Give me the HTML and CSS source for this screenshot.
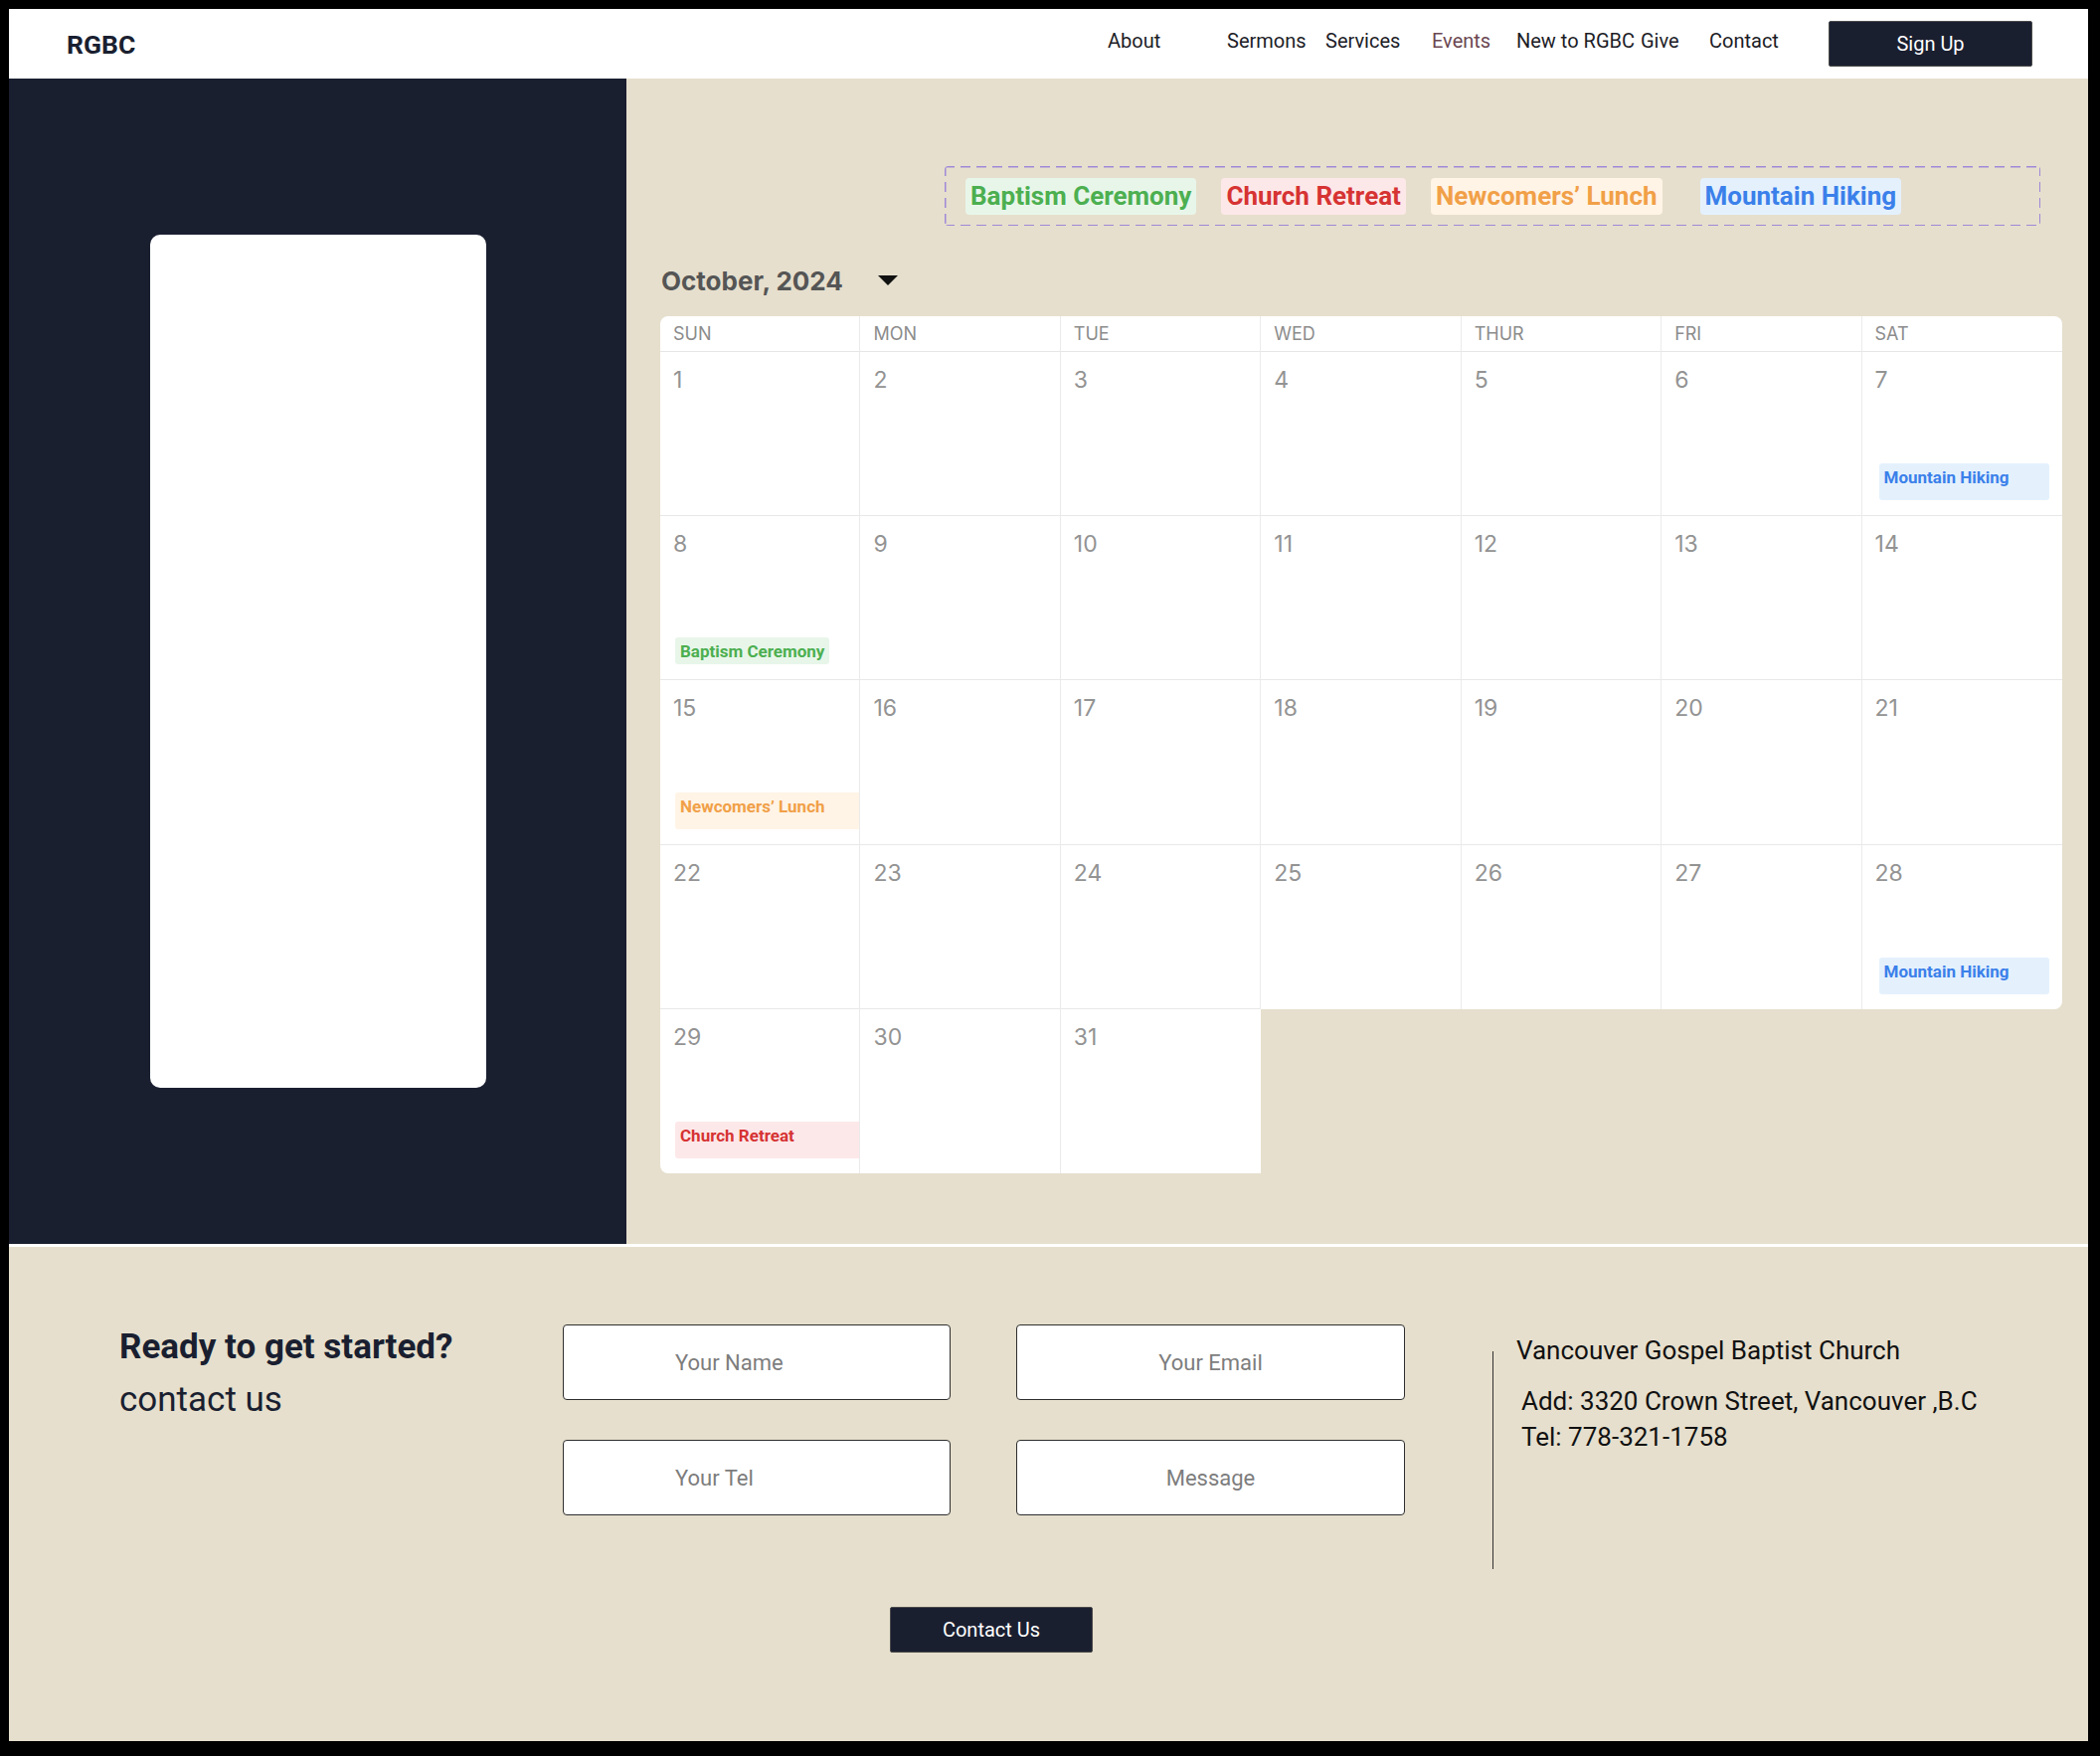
FILE: index.html
```html
<!DOCTYPE html>
<html lang="en">
<head>
<meta charset="utf-8">
<title>RGBC – Events</title>
<link rel="stylesheet" href="styles.css">
</head>
<body>
<div class="page">
  <header class="nav">
    <div class="logo">RGBC</div>
    <nav class="links">
      <a class="link w-about" href="#">About</a>
      <a class="link w-sermons" href="#">Sermons</a>
      <a class="link w-services" href="#">Services</a>
      <a class="link w-events active" href="#">Events</a>
      <a class="link w-new" href="#">New to RGBC</a>
      <a class="link w-give" href="#">Give</a>
      <a class="link w-contact" href="#">Contact</a>
      <a class="btn signup" href="#">Sign Up</a>
    </nav>
  </header>

  <main class="main">
    <aside class="side">
      <div class="card"></div>
    </aside>

    <section class="events">
      <div class="legend">
        <span class="tag green">Baptism Ceremony</span>
        <span class="tag red">Church Retreat</span>
        <span class="tag orange">Newcomers’ Lunch</span>
        <span class="tag blue">Mountain Hiking</span>
      </div>

      <div class="month">
        <h2 class="month-title">October, 2024</h2>
        <span class="caret"></span>
      </div>

      <div class="cal">
        <div class="dow first">SUN</div>
        <div class="dow">MON</div>
        <div class="dow">TUE</div>
        <div class="dow">WED</div>
        <div class="dow">THUR</div>
        <div class="dow">FRI</div>
        <div class="dow last nr">SAT</div>

        <div class="day"><span class="num">1</span></div>
        <div class="day"><span class="num">2</span></div>
        <div class="day"><span class="num">3</span></div>
        <div class="day"><span class="num">4</span></div>
        <div class="day"><span class="num">5</span></div>
        <div class="day"><span class="num">6</span></div>
        <div class="day nr"><span class="num">7</span><span class="ev blue sat">Mountain Hiking</span></div>

        <div class="day"><span class="num">8</span><span class="ev green short">Baptism Ceremony</span></div>
        <div class="day"><span class="num">9</span></div>
        <div class="day"><span class="num">10</span></div>
        <div class="day"><span class="num">11</span></div>
        <div class="day"><span class="num">12</span></div>
        <div class="day"><span class="num">13</span></div>
        <div class="day nr"><span class="num">14</span></div>

        <div class="day"><span class="num">15</span><span class="ev orange wide">Newcomers’ Lunch</span></div>
        <div class="day"><span class="num">16</span></div>
        <div class="day"><span class="num">17</span></div>
        <div class="day"><span class="num">18</span></div>
        <div class="day"><span class="num">19</span></div>
        <div class="day"><span class="num">20</span></div>
        <div class="day nr"><span class="num">21</span></div>

        <div class="day"><span class="num">22</span></div>
        <div class="day"><span class="num">23</span></div>
        <div class="day"><span class="num">24</span></div>
        <div class="day nb"><span class="num">25</span></div>
        <div class="day nb"><span class="num">26</span></div>
        <div class="day nb"><span class="num">27</span></div>
        <div class="day nb nr corner-br"><span class="num">28</span><span class="ev blue sat">Mountain Hiking</span></div>

        <div class="day nb corner-bl"><span class="num">29</span><span class="ev red wide">Church Retreat</span></div>
        <div class="day nb"><span class="num">30</span></div>
        <div class="day nb nr"><span class="num">31</span></div>
      </div>
    </section>
  </main>

  <footer class="footer">
    <div class="intro">
      <h3 class="intro-title">Ready to get started?</h3>
      <p class="intro-sub">contact us</p>
    </div>

    <form class="form">
      <input class="field" type="text" placeholder="Your Name">
      <input class="field centered" type="email" placeholder="Your Email">
      <input class="field" type="tel" placeholder="Your Tel">
      <input class="field centered" type="text" placeholder="Message">
      <button class="btn send" type="button">Contact Us</button>
    </form>

    <div class="info">
      <div class="vline"></div>
      <div class="info-text">
        <h4 class="info-name">Vancouver Gospel Baptist Church</h4>
        <p class="info-lines">Add: 3320 Crown Street, Vancouver ,B.C<br>Tel: 778-321-1758</p>
      </div>
    </div>
  </footer>
</div>
</body>
</html>
```

FILE: styles.css
```css
* { box-sizing: border-box; }

body {
  margin: 0;
  background: #000;
}

.page {
  width: 2091px;
  margin: 9px 0 0 9px;
  font-family: Roboto, "Liberation Sans", Arial, sans-serif;
}

/* ---------- nav ---------- */
.nav {
  height: 70px;
  background: #fff;
  display: flex;
  align-items: center;
}

.logo {
  margin-left: 58px;
  font-size: 26.5px;
  font-weight: 700;
  color: #1a1f30;
}

.links {
  margin-left: auto;
  margin-right: 56px;
  display: flex;
  align-items: center;
}

.link {
  font-size: 20px;
  color: #1d1d27;
  text-decoration: none;
  padding-bottom: 6px;
  white-space: nowrap;
}

.link.active { color: #6b4751; }

.w-about { width: 120px; }
.w-sermons { width: 99px; }
.w-services { width: 107px; }
.w-events { width: 85px; }
.w-new { width: 125px; }
.w-give { width: 69px; }
.w-contact { width: 120px; }

.btn {
  width: 205px;
  height: 46px;
  background: #1a1f30;
  color: #fff;
  border: 1px solid #4a4a4a;
  border-radius: 2px;
  display: flex;
  align-items: center;
  justify-content: center;
  font-family: Roboto, "Liberation Sans", Arial, sans-serif;
  font-size: 20px;
  text-decoration: none;
}

/* ---------- main ---------- */
.main {
  display: flex;
  height: 1172px;
}

.side {
  width: 621px;
  background: #1a1f30;
  display: flex;
  align-items: center;
  justify-content: center;
}

.card {
  width: 338px;
  height: 858px;
  background: #fff;
  border-radius: 10px;
}

.events {
  flex: 1;
  background: #e6dfcd;
  padding: 88px 26px 0 34px;
}

.legend {
  margin: 0 22px 0 286px;
  height: 60px;
  border-radius: 4px;
  background:
    repeating-linear-gradient(90deg, #9f88d8 0 10px, transparent 10px 16px) left top / 100% 1.5px no-repeat,
    repeating-linear-gradient(90deg, #9f88d8 0 10px, transparent 10px 16px) left bottom / 100% 1.5px no-repeat,
    repeating-linear-gradient(180deg, #9f88d8 0 10px, transparent 10px 16px) left top / 1.5px 100% no-repeat,
    repeating-linear-gradient(180deg, #9f88d8 0 10px, transparent 10px 16px) right top / 1.5px 100% no-repeat;
  display: flex;
  align-items: center;
  gap: 25px;
  padding-left: 21px;
}

.tag {
  height: 37px;
  line-height: 37px;
  padding: 0 5px;
  border-radius: 4px;
  font-size: 26px;
  font-weight: 700;
  white-space: nowrap;
}

.tag.blue { margin-left: 13px; }

.green { color: #4caf50; background: #e8f6ea; }
.red { color: #d63333; background: #fde8e9; }
.orange { color: #f1a048; background: #fff4e6; }
.blue { color: #3b80ea; background: #e4f1fd; }

.month {
  display: flex;
  align-items: center;
  height: 32px;
  margin: 39px 0 20px 1px;
}

.month-title {
  margin: 0;
  font-family: Inter, "Liberation Sans", sans-serif;
  font-size: 26px;
  font-weight: 700;
  color: #555;
}

.caret {
  margin-left: 35px;
  width: 0;
  height: 0;
  border-left: 10px solid transparent;
  border-right: 10px solid transparent;
  border-top: 10px solid #111;
}

/* ---------- calendar ---------- */
.cal {
  display: grid;
  grid-template-columns: repeat(7, 1fr);
  grid-template-rows: 36px repeat(5, 165.2px);
  font-family: Inter, "Liberation Sans", sans-serif;
}

.dow {
  background: #fff;
  border-right: 1px solid #ebebeb;
  border-bottom: 1px solid #e6e6e6;
  padding-left: 13px;
  line-height: 36px;
  font-size: 18px;
  color: #8c8c8c;
}

.dow.first { border-top-left-radius: 8px; }
.dow.last { border-top-right-radius: 8px; }

.day {
  background: #fff;
  border-right: 1px solid #ebebeb;
  border-bottom: 1px solid #e8e8e8;
  display: flex;
  flex-direction: column;
  justify-content: space-between;
  padding: 14px 0 15px 0;
}

.nr { border-right: none; }
.day.nb { border-bottom: none; }
.corner-br { border-bottom-right-radius: 8px; }
.corner-bl { border-bottom-left-radius: 8px; }

.num {
  padding-left: 13px;
  font-size: 23px;
  color: #939393;
  line-height: 28px;
}

.ev {
  font-family: Roboto, "Liberation Sans", Arial, sans-serif;
  font-size: 17px;
  font-weight: 700;
  line-height: 20px;
  border-radius: 3px;
  white-space: nowrap;
}

.ev.sat {
  margin: 0 13px 0 17px;
  padding: 4px 5px 13px;
}

.ev.wide {
  margin: 0 0 0 15px;
  padding: 4px 5px 13px;
  border-radius: 3px 0 0 3px;
}

.ev.short {
  align-self: flex-start;
  margin-left: 15px;
  padding: 4px 5px 3px;
}

/* ---------- footer ---------- */
.footer {
  height: 500px;
  border-top: 3px solid #fff;
  background: #e6dfcd;
  display: flex;
  align-items: flex-start;
  padding: 78px 0 0 111px;
}

.intro { width: 446px; }

.intro-title {
  margin: 2px 0 0;
  font-size: 35px;
  font-weight: 700;
  color: #1a1f30;
}

.intro-sub {
  margin: 12px 0 0;
  font-size: 35px;
  color: #1a1f30;
}

.form {
  width: 847px;
  display: grid;
  grid-template-columns: 390px 391px;
  column-gap: 66px;
  row-gap: 40px;
  margin: 0;
}

.field {
  height: 76px;
  border: 1px solid #2e2e2e;
  border-radius: 4px;
  background: #fff;
  font-family: Roboto, "Liberation Sans", Arial, sans-serif;
  font-size: 22px;
  color: #333;
  padding: 0 0 0 112px;
  outline: none;
}

.field::placeholder { color: #7d7d7d; }

.field.centered {
  padding: 0;
  text-align: center;
}

.send {
  grid-column: 1 / -1;
  justify-self: start;
  width: 204px;
  margin: 52px 0 0 329px;
  cursor: pointer;
}

.info {
  margin-left: 88px;
  padding-top: 11px;
  display: flex;
  align-items: flex-start;
}

.vline {
  width: 1px;
  height: 219px;
  margin-top: 16px;
  background: #333;
}

.info-text {
  padding-left: 23px;
  color: #111;
}

.info-name {
  margin: 0;
  font-size: 26px;
  font-weight: 400;
}

.info-lines {
  margin: 18px 0 0 5px;
  font-size: 26px;
  line-height: 36px;
}
```
